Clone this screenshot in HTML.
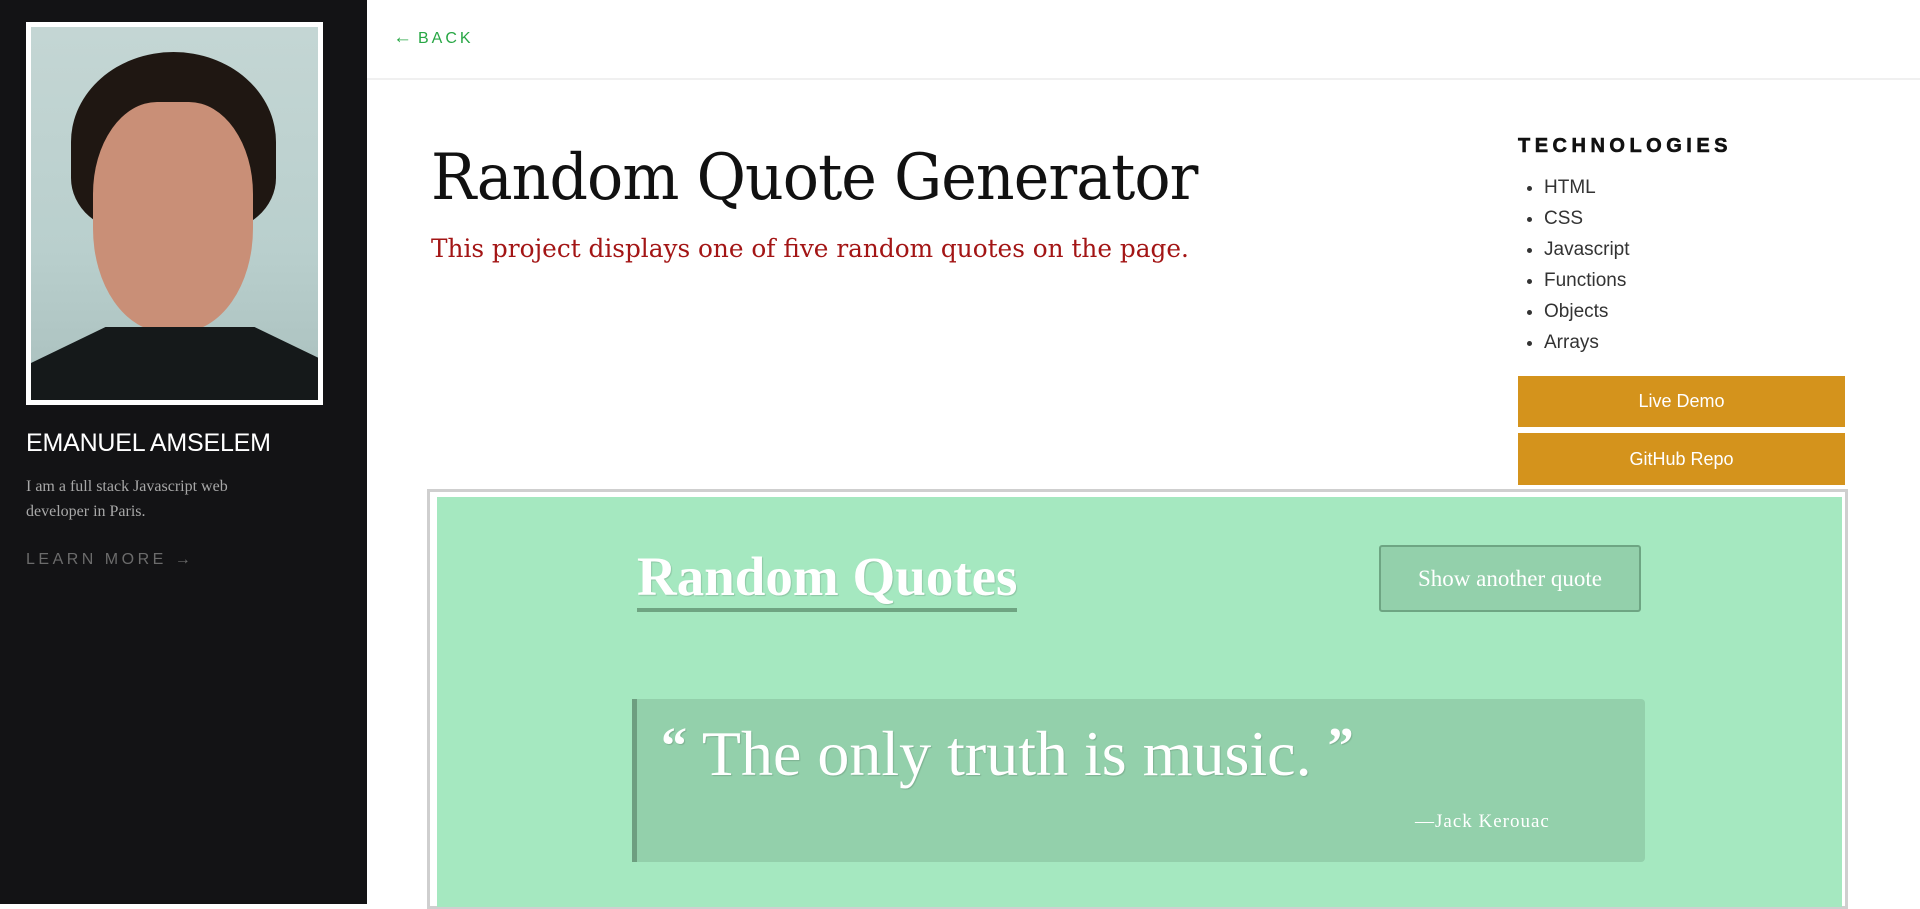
<!DOCTYPE html>
<html><head><meta charset="utf-8"><style>
*{margin:0;padding:0;box-sizing:border-box}
body{width:1920px;height:904px;overflow:hidden;background:#fff;font-family:"Liberation Serif",serif;position:relative}
.side{position:absolute;left:0;top:0;width:367px;height:904px;background:#131315}
.photo{position:absolute;left:26px;top:22px;width:297px;height:383px;border:5px solid #fff;background:linear-gradient(180deg,#c4d6d4 0%,#b9cfcd 60%,#a9bfbd 100%);overflow:hidden}
.hair{position:absolute;left:40px;top:25px;width:205px;height:180px;background:#1f1712;border-radius:50% 50% 30% 30%}
.face{position:absolute;left:62px;top:75px;width:160px;height:230px;background:#c98f77;border-radius:40% 40% 45% 45%}
.shirt{position:absolute;left:0;top:300px;width:298px;height:90px;background:#15191a;clip-path:polygon(0 40%,25% 0,75% 0,100% 40%,100% 100%,0 100%)}
.name{position:absolute;left:26px;top:429px;color:#fff;font-family:"Liberation Sans",sans-serif;font-size:25px;letter-spacing:-0.2px}
.bio{position:absolute;left:26px;top:474px;color:#a8a8a8;font-size:16px;line-height:25px;width:260px}
.more{position:absolute;left:26px;top:551px;color:#6b6b6b;font-family:"Liberation Sans",sans-serif;font-size:16px;letter-spacing:3.5px}
.back{position:absolute;left:393px;top:27px;color:#28a745;font-family:"Liberation Sans",sans-serif;font-size:16px;letter-spacing:3px}
.back span{font-size:19px;letter-spacing:6px}
.hline{position:absolute;left:367px;top:78px;width:1553px;height:2px;background:#f0f0f0}
h1{position:absolute;left:431px;top:141px;font-weight:normal;font-size:64px;color:#111;font-family:"DejaVu Serif","Liberation Serif",serif;letter-spacing:-1px;white-space:nowrap;transform:scaleX(0.94);transform-origin:left}
.sub{position:absolute;left:431px;top:234px;font-size:25px;color:#a31515;font-family:"DejaVu Serif",serif;transform:scaleX(0.99);transform-origin:left;white-space:nowrap}
.tech{position:absolute;left:1518px;top:135px;font-family:"Liberation Sans",sans-serif;font-weight:900;font-size:20px;letter-spacing:4.5px;color:#111;-webkit-text-stroke:0.6px #111}
ul{position:absolute;left:1544px;top:172px;font-family:"Liberation Sans",sans-serif;font-size:19px;color:#333;line-height:31px}
.btn{position:absolute;left:1518px;width:327px;background:#d4931c;color:#fff;font-family:"Liberation Sans",sans-serif;font-size:18px;text-align:center}
.frame{position:absolute;left:427px;top:489px;width:1421px;height:420px;border:3px solid #cfcfcf;background:#fff}
.green{position:absolute;left:437px;top:497px;width:1405px;height:410px;background:#a5e8c0}
.rq{position:absolute;left:637px;top:546px;color:#fff;font-size:55px;font-weight:bold;border-bottom:4px solid #6fa482;line-height:62px;text-shadow:1px 1px 1px rgba(0,0,0,.15);white-space:nowrap}
.show{position:absolute;left:1379px;top:545px;width:262px;height:67px;background:#93d0ab;border:2px solid #6ea583;border-radius:3px;color:#fff;font-size:23px;text-align:center;line-height:63px}
.qbox{position:absolute;left:632px;top:699px;width:1013px;height:163px;background:#93d0ab;border-left:5px solid #6e9e80;border-radius:0 4px 4px 0}
.q{position:absolute;left:24px;top:18px;color:#fff;font-size:64px;white-space:nowrap;text-shadow:1px 1px 1px rgba(0,0,0,.15)}
.q .m{font-size:52px;vertical-align:12px;font-weight:bold}
.auth{position:absolute;left:778px;top:112px;color:#fff;font-size:19px;letter-spacing:1px}
</style></head><body>
<div class="side">
<div class="photo"><div class="hair"></div><div class="face"></div><div class="shirt"></div></div>
<div class="name">EMANUEL AMSELEM</div>
<div class="bio">I am a full stack Javascript web developer in Paris.</div>
<div class="more">LEARN MORE →</div>
</div>
<div class="back"><span>←</span>BACK</div>
<div class="hline"></div>
<h1>Random Quote Generator</h1>
<div class="sub">This project displays one of five random quotes on the page.</div>
<div class="tech">TECHNOLOGIES</div>
<ul><li>HTML</li><li>CSS</li><li>Javascript</li><li>Functions</li><li>Objects</li><li>Arrays</li></ul>
<div class="btn" style="top:376px;height:51px;line-height:51px">Live Demo</div>
<div class="btn" style="top:433px;height:52px;line-height:52px">GitHub Repo</div>
<div class="frame"></div>
<div class="green"></div>
<div class="rq">Random Quotes</div>
<div class="show">Show another quote</div>
<div class="qbox"><div class="q"><span class="m">“</span> The only truth is music. <span class="m">”</span></div><div class="auth">—Jack Kerouac</div></div>
</body></html>
